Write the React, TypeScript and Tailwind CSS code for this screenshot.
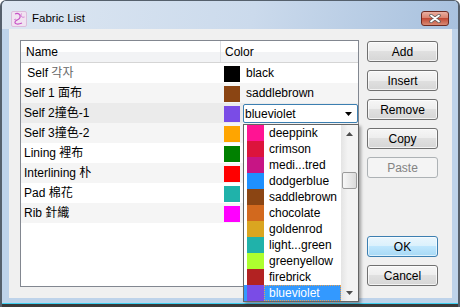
import React from 'react';

type Row = { name: string; color: string; label: string; editing?: boolean };

// labels for rows 4-8 are covered by the open list, so they stay empty
const rows: Row[] = [
    { name: ' Self 각자', color: '#000000', label: 'black' },
    { name: 'Self 1 面布', color: '#8b4513', label: 'saddlebrown' },
    { name: 'Self 2撞色-1', color: '#7a4ce6', label: 'blueviolet', editing: true },
    { name: 'Self 3撞色-2', color: '#ffa500', label: '' },
    { name: 'Lining 裡布', color: '#008000', label: '' },
    { name: 'Interlining 朴', color: '#ff0000', label: '' },
    { name: 'Pad 棉花', color: '#20b2aa', label: '' },
    { name: 'Rib 針織', color: '#ff00ff', label: '' },
];

const options = [
    { color: '#ff1493', label: 'deeppink' },
    { color: '#dc143c', label: 'crimson' },
    { color: '#c71585', label: 'medi...tred' },
    { color: '#1e90ff', label: 'dodgerblue' },
    { color: '#8b4513', label: 'saddlebrown' },
    { color: '#d2691e', label: 'chocolate' },
    { color: '#daa520', label: 'goldenrod' },
    { color: '#20b2aa', label: 'light...green' },
    { color: '#adff2f', label: 'greenyellow' },
    { color: '#b22222', label: 'firebrick' },
    { color: '#7a4ce6', label: 'blueviolet', selected: true },
];

const TitleIcon = () => (
    <svg width="16" height="16" viewBox="0 0 16 16">
        <rect x="0.5" y="0.5" width="15" height="15" rx="1.5" fill="#f1e3f1" stroke="#dcbcdc" />
        <path d="M4 3c3-1.5 6 0.5 5 3.5s-4.5 2-5 4.5 3.5 2.5 7 1" stroke="#c652c6" strokeWidth="1.2" fill="none" />
        <path d="M10.5 2.5c-1.5 2.5 0.5 4.5 3 3.5M3 9c1-1 2-1 2.5 0" stroke="#d47ad4" strokeWidth="1" fill="none" />
    </svg>
);

const CloseButton = () => (
    <div className="w-[28px] h-[15px] rounded-[3px] border border-[#6e2b22] flex items-center justify-center bg-[linear-gradient(#eab0a2_0%,#d77d69_50%,#c24a35_50%,#d88a74_100%)]">
        <svg width="12" height="9" viewBox="0 0 12 9">
            <path d="M2 1.5l8 6M10 1.5l-8 6" stroke="#5a5a5a" strokeWidth="3.4" strokeLinecap="round" />
            <path d="M2 1.5l8 6M10 1.5l-8 6" stroke="#ffffff" strokeWidth="1.8" strokeLinecap="round" />
        </svg>
    </div>
);

const Button = ({ label, kind = 'normal' }: { label: string; kind?: 'normal' | 'default' | 'disabled' }) => {
    if (kind === 'disabled') {
        return (
            <div className="h-[21px] rounded-[3px] border border-[#adb2b5] bg-[#f4f4f4] text-[#838383] flex items-center justify-center">
                {label}
            </div>
        );
    }
    if (kind === 'default') {
        return (
            <div className="h-[21px] rounded-[3px] border border-[#3c7fb1] shadow-[inset_0_0_0_1px_rgba(255,255,255,0.6)] bg-[linear-gradient(#eaf6fd_0%,#d9f0fc_50%,#bee6fd_50%,#a7d9f5_100%)] flex items-center justify-center">
                {label}
            </div>
        );
    }
    return (
        <div className="h-[21px] rounded-[3px] border border-[#707070] shadow-[inset_0_0_0_1px_rgba(255,255,255,0.7)] bg-[linear-gradient(#f6f6f6_0%,#ededed_50%,#e0e0e0_50%,#d6d6d6_100%)] flex items-center justify-center">
            {label}
        </div>
    );
};

const Dropdown = () => (
    <div className="absolute left-[243px] top-[124px] w-[116px] h-[178px] border border-[#646464] bg-white flex shadow-[2px_2px_3px_rgba(0,0,0,0.35)]">
        <div className="w-[97px] flex flex-col">
            {options.map(o => (
                <div
                    key={o.label}
                    className={`h-[16px] flex pl-[3px] ${o.selected ? 'bg-[#3399ff] text-white' : ''}`}
                >
                    <div className="w-[17px] h-[16px]" style={{ backgroundColor: o.color }} />
                    {o.selected ? (
                        <div className="flex-1 flex items-center pl-[4px] border border-dotted border-[#e8a050]">{o.label}</div>
                    ) : (
                        <div className="flex-1 flex items-center pl-[5px]">{o.label}</div>
                    )}
                </div>
            ))}
        </div>
        {/* scrollbar */}
        <div className="w-[17px] flex flex-col bg-[linear-gradient(to_right,#e4e4e4,#f3f3f3_40%,#f3f3f3)]">
            <div className="h-[17px] flex items-center justify-center">
                <svg width="7" height="4" viewBox="0 0 7 4"><path d="M3.5 0L7 4H0z" fill="#4d4d4d" /></svg>
            </div>
            <div className="mt-[30px] mx-[1px] h-[17px] rounded-[2px] border border-[#9b9b9b] bg-[linear-gradient(to_right,#f7f7f7,#e9e9e9_50%,#dadada)]" />
            <div className="flex-1" />
            <div className="h-[17px] flex items-center justify-center">
                <svg width="7" height="4" viewBox="0 0 7 4"><path d="M0 0H7L3.5 4z" fill="#4d4d4d" /></svg>
            </div>
        </div>
    </div>
);

export default function App() {
    return (
        <div className="relative w-[460px] h-[307px] bg-white text-[12px] text-black [font-family:'Liberation_Sans','Noto_Sans_CJK_TC','Noto_Sans_CJK_KR',sans-serif]">
            <div className="w-[460px] h-[307px] flex flex-col rounded-t-[6px] border-t border-x-2 border-[#55606c] bg-[#bed3ea] overflow-hidden">
                {/* Title bar */}
                <div className="h-[28px] shrink-0 flex items-center pt-[7px] pl-[9px] pr-[9px] bg-[linear-gradient(100deg,#dde7f2_0%,#cbdaec_55%,#a8c1de_100%)]">
                    <TitleIcon />
                    <span className="ml-[5px] text-[11.5px]">Fabric List</span>
                    <div className="flex-1" />
                    <CloseButton />
                </div>

                {/* Content */}
                <div className="h-[269px] shrink-0 ml-[7px] mr-[6px] bg-[#f0f0f0] flex pl-[11px] pt-[11px]">
                    <div className="w-[339px] h-[247px] border border-[#828790] bg-white flex flex-col">
                        <div className="h-[22px] shrink-0 flex border-b border-[#d5d5d5] bg-[linear-gradient(#ffffff_0%,#ffffff_50%,#f2f3f5_50%,#f2f3f5_100%)]">
                            <div className="w-[200px] border-r border-[#dde0e5] pl-[5px] flex items-center">Name</div>
                            <div className="flex-1 pl-[4px] flex items-center">Color</div>
                        </div>
                        {rows.map((r, i) => (
                            <div
                                key={r.name}
                                className={`h-[20px] shrink-0 flex items-center ${r.editing ? 'bg-[#ebebeb]' : i % 2 === 1 ? 'bg-[#f5f5f5]' : 'bg-white'}`}
                            >
                                <div className="w-[200px] pl-[3px] whitespace-pre">
                                    {i === 0 ? <>{' Self '}<span className="text-[#666]">각자</span></> : r.name}
                                </div>
                                <div className="flex-1 flex items-center pl-[3px] self-stretch">
                                    <div className="w-[16px] h-[16px] mt-[2px]" style={{ backgroundColor: r.color }} />
                                    {r.editing ? (
                                        <div className="ml-[3px] mt-[1px] flex-1 h-[19px] border border-[#3c7fb1] rounded-[2px] bg-white flex items-center pl-[1px] pr-[5px]">
                                            <span className="flex-1">{r.label}</span>
                                            <svg width="7" height="4" viewBox="0 0 7 4"><path d="M0 0H7L3.5 4z" fill="#000" /></svg>
                                        </div>
                                    ) : (
                                        r.label && <span className="ml-[6px]">{r.label}</span>
                                    )}
                                </div>
                            </div>
                        ))}
                    </div>

                    <div className="ml-[8px] w-[71px] h-[247px] flex flex-col py-[1px]">
                        <div className="flex flex-col gap-[8px]">
                            <Button label="Add" />
                            <Button label="Insert" />
                            <Button label="Remove" />
                            <Button label="Copy" />
                            <Button label="Paste" kind="disabled" />
                        </div>
                        <div className="flex-1" />
                        <div className="flex flex-col gap-[8px]">
                            <Button label="OK" kind="default" />
                            <Button label="Cancel" />
                        </div>
                    </div>
                </div>

                {/* Bottom frame */}
                <div className="h-[5px] shrink-0" />
                <div className="h-[1px] shrink-0 bg-[#3fd0f0]" />
                <div className="flex-1 bg-[#3a3a3a]" />
            </div>
            <Dropdown />
        </div>
    );
}
